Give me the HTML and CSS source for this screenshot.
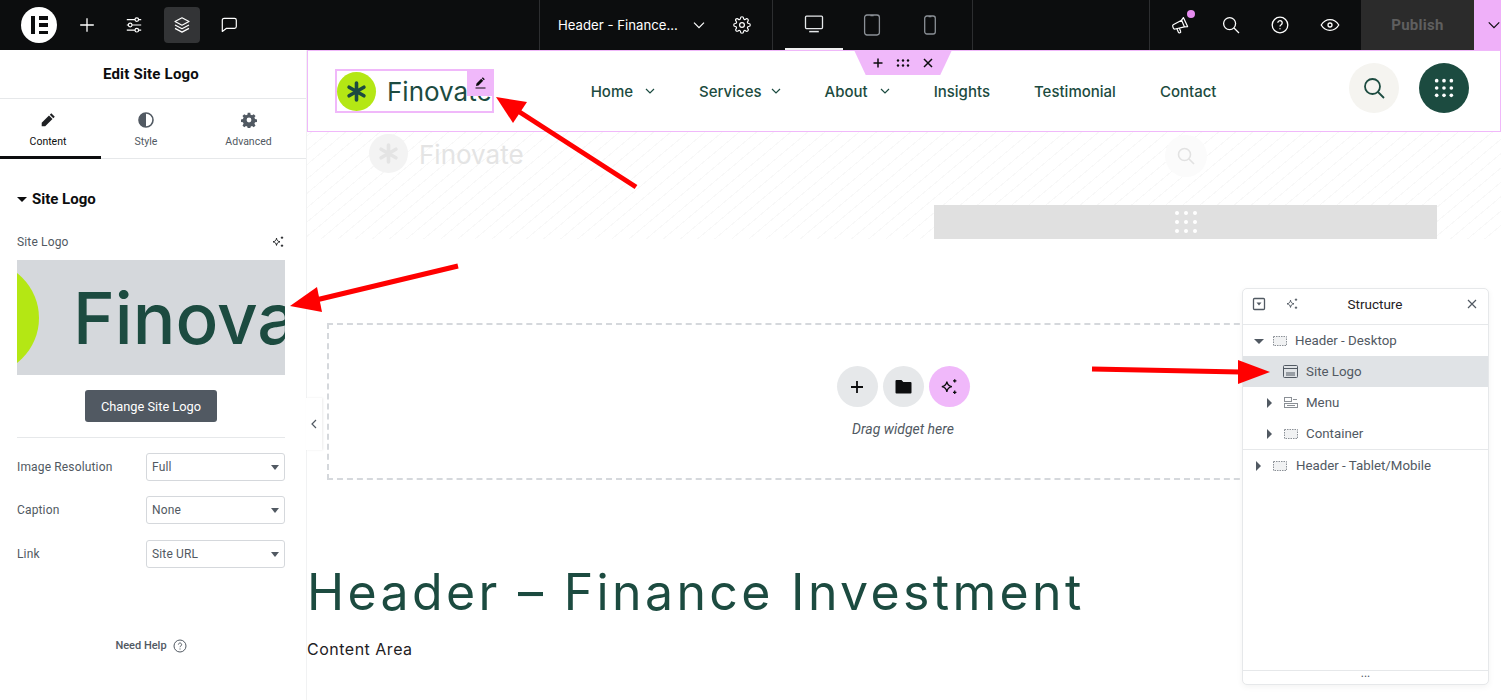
FILE: index.html
```html
<!DOCTYPE html>
<html lang="en">
<head>
    <meta charset="UTF-8">
    <meta name="viewport" content="width=device-width, initial-scale=1.0">
    <title>Edit Site Logo</title>
    <link rel="stylesheet" href="styles.css">
</head>
<body>
    <header class="topbar">
        <div class="top-tools">
            <span class="el-logo"><i class="el-bar"></i><i class="el-lines"><b></b><b></b><b></b></i></span>
            <button class="top-btn"><svg width="20" height="20" viewBox="0 0 20 20" fill="none" stroke="#fff" stroke-width="1.3"><path d="M10 3.2v13.6M3.2 10h13.6"/></svg></button>
            <button class="top-btn"><svg width="20" height="20" viewBox="0 0 20 20" fill="none" stroke="#fff" stroke-width="1.2"><path d="M2.8 4.6h8.2M14.6 4.6h2.6M2.8 10h1.6M8 10h9.2M2.8 15.2h8.2M14.6 15.2h2.6"/><circle cx="12.8" cy="4.6" r="1.8"/><circle cx="6.2" cy="10" r="1.8"/><circle cx="12.8" cy="15.2" r="1.8"/></svg></button>
            <button class="top-btn top-btn-active"><svg width="20" height="20" viewBox="0 0 20 20" fill="none" stroke="#fff" stroke-width="1.2" stroke-linejoin="round"><path d="M10 2.8l7 3.7-7 3.7-7-3.7z"/><path d="M3 10l7 3.7 7-3.7M3 13.4l7 3.7 7-3.7"/></svg></button>
            <button class="top-btn"><svg width="20" height="20" viewBox="0 0 20 20" fill="none" stroke="#fff" stroke-width="1.2" stroke-linejoin="round"><path d="M5.5 3.4h10a1.8 1.8 0 0 1 1.8 1.8v6.4a1.8 1.8 0 0 1-1.8 1.8H7.2l-3.9 3V5.2a1.8 1.8 0 0 1 2.2-1.8z"/></svg></button>
        </div>
        <div class="top-title">
            <span class="doc-name">Header - Finance...</span>
            <svg class="doc-caret" width="14" height="14" viewBox="0 0 14 14" fill="none" stroke="#fff" stroke-width="1.2"><path d="M2 4.6l5 5 5-5"/></svg>
            <svg class="doc-gear" width="18" height="18" viewBox="0 0 24 24" fill="none" stroke="#fff" stroke-width="1.6" stroke-linejoin="round"><circle cx="12" cy="12" r="3.2"/><path d="M19.4 15a1.7 1.7 0 0 0 .3 1.8l.1.1a2 2 0 1 1-2.900 2.900l-.1-.1a1.7 1.7 0 0 0-2.800 1.200v.1a2 2 0 1 1-4 0v-.1a1.7 1.7 0 0 0-2.900-1.200l-.1.1a2 2 0 1 1-2.800-2.900l.1-.1a1.7 1.7 0 0 0-1.200-2.800H3a2 2 0 1 1 0-4h.1a1.7 1.7 0 0 0 1.200-2.900l-.1-.1a2 2 0 1 1 2.800-2.800l.1.1a1.7 1.7 0 0 0 2.900-1.200V3a2 2 0 1 1 4 0v.1a1.7 1.7 0 0 0 2.800 1.200l.1-.1a2 2 0 1 1 2.900 2.800l-.1.1a1.7 1.7 0 0 0 1.200 2.900h.1a2 2 0 1 1 0 4h-.1a1.7 1.7 0 0 0-1.500 1z"/></svg>
        </div>
        <div class="top-devices">
            <span class="device device-active"><svg width="20" height="20" viewBox="0 0 20 20" fill="none" stroke="#e6e8ea" stroke-width="1.3" stroke-linejoin="round"><rect x="1.5" y="2.2" width="17" height="12.4" rx="1"/><path d="M5.2 17.6h9.6" stroke-width="1.5"/></svg></span>
            <span class="device"><svg width="18" height="22" viewBox="0 0 18 22" fill="none" stroke="#8b9096" stroke-width="1.3"><rect x="1.6" y="1" width="14.8" height="20" rx="2.4"/><path d="M7.4 1.6h3.2"/></svg></span>
            <span class="device"><svg width="14" height="20" viewBox="0 0 14 20" fill="none" stroke="#8b9096" stroke-width="1.3"><rect x="1.7" y="1" width="10.6" height="18" rx="2.2"/><path d="M5.6 1.6h2.8"/></svg></span>
        </div>
        <div class="top-spacer"></div>
        <div class="top-actions">
            <span class="action action-notify"><svg width="20" height="20" viewBox="0 0 20 20" fill="none" stroke="#fff" stroke-width="1.2" stroke-linejoin="round"><path d="M2.2 9.8l8.400-4.600 2.800 6.600-9.200 2.200a1.700 1.700 0 0 1-2-1.200l-.4-1.200a1.500 1.500 0 0 1 .4-1.800z"/><path d="M10.600 5.200L12.400 2.600l4.200 9-3.200.2"/><path d="M5.800 13.600l1.600 3.600a1.200 1.200 0 0 0 2.200-1l-1.200-3"/></svg></span>
            <span class="action"><svg width="20" height="20" viewBox="0 0 20 20" fill="none" stroke="#fff" stroke-width="1.3"><circle cx="8.6" cy="8.6" r="6"/><path d="M13 13l5 5"/></svg></span>
            <span class="action"><svg width="20" height="20" viewBox="0 0 20 20" fill="none" stroke="#fff" stroke-width="1.3"><circle cx="10" cy="10" r="7.8"/><path d="M7.8 7.8a2.200 2.200 0 1 1 3.400 1.900c-.8.500-1.200 1-1.200 1.900"/><path d="M10 13.2v1"/></svg></span>
            <span class="action"><svg width="20" height="20" viewBox="0 0 20 20" fill="none" stroke="#fff" stroke-width="1.3"><path d="M1.2 10C3.4 6.4 6.4 4.6 10 4.6s6.600 1.800 8.800 5.400c-2.200 3.600-5.200 5.400-8.800 5.400S3.400 13.600 1.200 10z"/><circle cx="10" cy="10" r="2"/></svg></span>
        </div>
        <button class="publish">Publish</button>
        <button class="publish-more"><svg width="16" height="16" viewBox="0 0 16 16" fill="none" stroke="#0c0d0e" stroke-width="1.4"><path d="M2 5l6 6 6-6"/></svg></button>
    </header>

    <div class="workspace">
        <aside class="sidebar">
            <h2 class="side-title">Edit Site Logo</h2>
            <nav class="tabs">
                <a class="tab tab-active">
                    <svg width="16" height="16" viewBox="0 0 16 16" fill="#1f2124"><path d="M11.3 1.200l3.500 3.500-1.500 1.500-3.500-3.500zM9 3.500l3.500 3.500-7.300 7.300H1.700v-3.500z"/></svg>
                    Content
                </a>
                <a class="tab">
                    <svg width="16" height="16" viewBox="0 0 16 16"><circle cx="8" cy="8" r="7" fill="none" stroke="#515962" stroke-width="1.6"/><path d="M8 1a7 7 0 0 0 0 14z" fill="#515962"/></svg>
                    Style
                </a>
                <a class="tab">
                    <svg width="16" height="16" viewBox="0 0 24 24" fill="#515962"><path d="M13.9 1l.5 3a8.500 8.500 0 0 1 2.200.9l2.500-1.700 2.700 2.700-1.700 2.500c.4.700.7 1.400.9 2.200l3 .5v3.800l-3 .5a8.500 8.500 0 0 1-.9 2.200l1.700 2.500-2.700 2.700-2.500-1.700c-.7.400-1.400.7-2.200.9l-.5 3h-3.800l-.5-3a8.500 8.500 0 0 1-2.200-.9l-2.500 1.700-2.700-2.700 1.700-2.500a8.500 8.500 0 0 1-.9-2.200l-3-.5v-3.800l3-.5c.2-.8.5-1.500.9-2.200L2.200 5.900l2.700-2.700 2.500 1.700c.7-.4 1.400-.7 2.200-.9l.5-3zM12 8.400a3.600 3.600 0 1 0 0 7.200 3.600 3.600 0 0 0 0-7.200z"/></svg>
                    Advanced
                </a>
            </nav>
            <div class="side-body">
                <h3 class="section-title"><i class="caret-down"></i>Site Logo</h3>
                <div class="label-row">
                    <span class="field-label">Site Logo</span>
                    <svg width="14" height="14" viewBox="0 0 14 14" fill="none" stroke="#1f2124"><path d="M5.5 3.200c.4 2.300 1.300 3.200 3.500 3.600-2.200.4-3.100 1.300-3.500 3.600-.4-2.300-1.300-3.200-3.500-3.600 2.200-.4 3.100-1.300 3.500-3.600z"/><path d="M11 1.500v2.400M9.800 2.700h2.400M11 9.500v2.400M9.800 10.700h2.400" stroke-width="1"/></svg>
                </div>
                <div class="logo-preview">
                    <span class="preview-dot"></span>
                    <span class="preview-name">Finovate</span>
                </div>
                <button class="change-btn">Change Site Logo</button>
                <div class="side-rule"></div>
                <div class="field-row">
                    <span class="field-label">Image Resolution</span>
                    <span class="fake-select">Full</span>
                </div>
                <div class="field-row">
                    <span class="field-label">Caption</span>
                    <span class="fake-select">None</span>
                </div>
                <div class="field-row">
                    <span class="field-label">Link</span>
                    <span class="fake-select">Site URL</span>
                </div>
                <div class="need-help">
                    Need Help
                    <svg width="14" height="14" viewBox="0 0 14 14" fill="none" stroke="#515962"><circle cx="7" cy="7" r="6"/><path d="M5.4 5.500a1.600 1.600 0 1 1 2.500 1.400c-.6.400-.9.700-.9 1.300M7 9.500v1"/></svg>
                </div>
            </div>
        </aside>

        <main class="canvas">
            <div class="site-header">
                <div class="logo-widget">
                    <span class="logo-dot"><svg width="21" height="21" viewBox="0 0 21 21" stroke="#1c4b40" stroke-width="3.6" stroke-linecap="round"><path d="M10.5 2v17M3.100 6.200l14.800 8.600M17.900 6.200L3.100 14.800"/></svg></span>
                    <span class="logo-name">Finovate</span>
                    <span class="logo-edit"><svg width="13" height="13" viewBox="0 0 13 13" fill="#0c0d0e"><path d="M8.8 1.200l2 2-1 1-2-2zM7.200 2.800l2 2-4.700 4.700-2.500.5.500-2.500z"/><path d="M1.5 12h10" stroke="#0c0d0e"/></svg></span>
                </div>
                <nav class="site-nav">
                    <a class="nav-link">Home<svg width="10" height="10" viewBox="0 0 10 10" fill="none" stroke="#1c4b40" stroke-width="1.2"><path d="M1 3l4 4 4-4"/></svg></a>
                    <a class="nav-link">Services<svg width="10" height="10" viewBox="0 0 10 10" fill="none" stroke="#1c4b40" stroke-width="1.2"><path d="M1 3l4 4 4-4"/></svg></a>
                    <a class="nav-link">About<svg width="10" height="10" viewBox="0 0 10 10" fill="none" stroke="#1c4b40" stroke-width="1.2"><path d="M1 3l4 4 4-4"/></svg></a>
                    <a class="nav-link">Insights</a>
                    <a class="nav-link">Testimonial</a>
                    <a class="nav-link">Contact</a>
                </nav>
                <div class="header-btns">
                    <span class="round-btn round-light"><svg width="24" height="24" viewBox="0 0 24 24" fill="none" stroke="#1c4b40" stroke-width="1.8"><circle cx="10.5" cy="10.5" r="7.5"/><path d="M16 16l6 6"/></svg></span>
                    <span class="round-btn round-dark"><svg width="22" height="22" viewBox="0 0 24 24" fill="#fff"><circle cx="4" cy="4" r="2"/><circle cx="12" cy="4" r="2"/><circle cx="20" cy="4" r="2"/><circle cx="4" cy="12" r="2"/><circle cx="12" cy="12" r="2"/><circle cx="20" cy="12" r="2"/><circle cx="4" cy="20" r="2"/><circle cx="12" cy="20" r="2"/><circle cx="20" cy="20" r="2"/></svg></span>
                </div>
            </div>

            <div class="ghost-row">
                <div class="ghost-logo">
                    <span class="ghost-dot"><svg width="21" height="21" viewBox="0 0 21 21" stroke="#e4e4e4" stroke-width="3.6" stroke-linecap="round"><path d="M10.5 2v17M3.100 6.200l14.800 8.600M17.900 6.200L3.100 14.800"/></svg></span>
                    <span class="ghost-name">Finovate</span>
                </div>
                <div class="ghost-right">
                    <span class="ghost-search"><svg width="20" height="20" viewBox="0 0 20 20" fill="none" stroke="#e2e2e2" stroke-width="1.6"><circle cx="8.5" cy="8.5" r="6"/><path d="M13 13l5 5"/></svg></span>
                    <div class="ghost-bar"><svg width="24" height="24" viewBox="0 0 24 24" fill="#fff"><circle cx="3" cy="3" r="2"/><circle cx="12" cy="3" r="2"/><circle cx="21" cy="3" r="2"/><circle cx="3" cy="12" r="2"/><circle cx="12" cy="12" r="2"/><circle cx="21" cy="12" r="2"/><circle cx="3" cy="21" r="2"/><circle cx="12" cy="21" r="2"/><circle cx="21" cy="21" r="2"/></svg></div>
                </div>
            </div>

            <div class="dropzone">
                <div class="drop-btns">
                    <span class="drop-btn"><svg width="16" height="16" viewBox="0 0 16 16" fill="none" stroke="#0c0d0e" stroke-width="1.8"><path d="M8 2v12M2 8h12"/></svg></span>
                    <span class="drop-btn"><svg width="17" height="15" viewBox="0 0 17 15" fill="#0c0d0e"><path d="M1.5 1h5l1.800 2h7.200a1 1 0 0 1 1 1v9.500a1 1 0 0 1-1 1h-14a1 1 0 0 1-1-1V2a1 1 0 0 1 1-1z"/></svg></span>
                    <span class="drop-btn drop-btn-ai"><svg width="20" height="20" viewBox="0 0 14 14" fill="none" stroke="#0c0d0e" stroke-width=".9"><path d="M5.5 3.200c.4 2.300 1.300 3.200 3.500 3.600-2.200.4-3.100 1.300-3.500 3.600-.4-2.300-1.300-3.200-3.500-3.600 2.200-.4 3.100-1.300 3.500-3.600z"/><path d="M11 1.500v2.400M9.800 2.700h2.400M11 9.500v2.400M9.800 10.700h2.400"/></svg></span>
                </div>
                <p class="drop-hint">Drag widget here</p>
            </div>

            <h1 class="page-title">Header – Finance Investment</h1>
            <p class="page-text">Content Area</p>

            <div class="section-handle">
                <svg width="10" height="10" viewBox="0 0 10 10" fill="none" stroke="#0c0d0e" stroke-width="1.5"><path d="M5 .5v9M.5 5h9"/></svg>
                <svg width="14" height="8" viewBox="0 0 14 8" fill="#0c0d0e"><circle cx="2" cy="1.5" r="1.2"/><circle cx="7" cy="1.5" r="1.2"/><circle cx="12" cy="1.5" r="1.2"/><circle cx="2" cy="6.5" r="1.2"/><circle cx="7" cy="6.5" r="1.2"/><circle cx="12" cy="6.5" r="1.2"/></svg>
                <svg width="10" height="10" viewBox="0 0 10 10" fill="none" stroke="#0c0d0e" stroke-width="1.5"><path d="M1 1l8 8M9 1l-8 8"/></svg>
            </div>
            <span class="collapse-tab"><svg width="8" height="10" viewBox="0 0 8 10" fill="none" stroke="#515962" stroke-width="1.2"><path d="M6 1L2 5l4 4"/></svg></span>
        </main>
    </div>

    <section class="structure">
        <div class="structure-head">
            <svg width="14" height="14" viewBox="0 0 14 14" fill="none" stroke="#515962" stroke-width="1.3"><rect x="1.5" y="1.5" width="11" height="11" rx="1"/><path d="M4.5 5.500h5L7 8.500z" fill="#515962" stroke="none"/></svg>
            <svg class="structure-ai" width="14" height="14" viewBox="0 0 14 14" fill="none" stroke="#515962"><path d="M5.5 3.200c.4 2.300 1.300 3.200 3.500 3.600-2.200.4-3.100 1.300-3.500 3.600-.4-2.300-1.300-3.200-3.500-3.600 2.200-.4 3.100-1.300 3.500-3.600z"/><path d="M11 1.500v2.400M9.800 2.700h2.400M11 9.500v2.400M9.800 10.700h2.400" stroke-width="1"/></svg>
            <span class="structure-title">Structure</span>
            <svg width="10" height="10" viewBox="0 0 10 10" fill="none" stroke="#515962" stroke-width="1.2"><path d="M1 1l8 8M9 1l-8 8"/></svg>
        </div>
        <ul class="tree">
            <li class="tree-item"><i class="caret-down caret-grey"></i><svg class="box-icon" width="14" height="10" viewBox="0 0 14 10" fill="#f1f2f3" stroke="#8b9096" stroke-dasharray="1.5 1"><rect x=".5" y=".5" width="13" height="9"/></svg>Header - Desktop</li>
            <li class="tree-item tree-selected"><svg class="box-icon" width="15" height="13" viewBox="0 0 15 13" fill="none" stroke="#515962"><rect x=".5" y=".5" width="14" height="12" rx="1"/><path d="M.5 3.500h14M3 8h9M3 10h9"/></svg>Site Logo</li>
            <li class="tree-item tree-child"><i class="caret-right"></i><svg class="box-icon" width="14" height="11" viewBox="0 0 14 11" fill="none" stroke="#8b9096"><rect x=".5" y=".5" width="7" height="4"/><rect x=".5" y="6.5" width="13" height="4"/><path d="M9 2.500h4M3 8.500h8"/></svg>Menu</li>
            <li class="tree-item tree-child"><i class="caret-right"></i><svg class="box-icon" width="14" height="10" viewBox="0 0 14 10" fill="#f1f2f3" stroke="#8b9096" stroke-dasharray="1.5 1"><rect x=".5" y=".5" width="13" height="9"/></svg>Container</li>
            <li class="tree-item tree-top"><i class="caret-right"></i><svg class="box-icon" width="14" height="10" viewBox="0 0 14 10" fill="#f1f2f3" stroke="#8b9096" stroke-dasharray="1.5 1"><rect x=".5" y=".5" width="13" height="9"/></svg>Header - Tablet/Mobile</li>
        </ul>
        <div class="structure-foot">...</div>
    </section>

    <svg class="arrows" width="1501" height="700" viewBox="0 0 1501 700" fill="#ff0000" stroke="none">
        <path d="M636 187L518 111" stroke="#ff0000" stroke-width="5"/>
        <polygon points="496,97 527,102 513,123"/>
        <path d="M458 266L316 300" stroke="#ff0000" stroke-width="5"/>
        <polygon points="290,306 317,287 322,312"/>
        <path d="M1092 369L1240 372" stroke="#ff0000" stroke-width="5"/>
        <polygon points="1270,372 1238,360 1238,384"/>
    </svg>
</body>
</html>
```

FILE: styles.css
```css
* {
    box-sizing: border-box;
}
body {
    font-family: Roboto, 'Liberation Sans', sans-serif;
    background-color: white;
    margin: 0;
    height: 700px;
    overflow: hidden;
    position: relative;
    color: #1f2124;
}
button {
    font-family: inherit;
    border: none;
    padding: 0;
    cursor: pointer;
}

/* top bar */
.topbar {
    display: flex;
    height: 50px;
    background-color: #0c0d0e;
    color: white;
}
.top-tools {
    display: flex;
    align-items: center;
    width: 539px;
    padding-left: 21px;
    gap: 11.5px;
}
.el-logo {
    display: flex;
    justify-content: center;
    align-items: center;
    gap: 4px;
    width: 36px;
    height: 36px;
    border-radius: 50%;
    background-color: white;
}
.el-bar {
    width: 4px;
    height: 18px;
    background-color: #0c0d0e;
}
.el-lines {
    display: flex;
    flex-direction: column;
    justify-content: space-between;
    width: 9px;
    height: 18px;
}
.el-lines b {
    height: 3.5px;
    background-color: #0c0d0e;
}
.top-btn {
    display: flex;
    justify-content: center;
    align-items: center;
    width: 36px;
    height: 36px;
    border-radius: 4px;
    background: none;
}
.top-btn-active {
    background-color: #333436;
}
.top-title {
    display: flex;
    align-items: center;
    width: 234px;
    padding-left: 18px;
    border-left: 1px solid #2d2e30;
    border-right: 1px solid #2d2e30;
}
.doc-name {
    font-family: Inter, sans-serif;
    font-size: 13.2px;
    width: 134px;
    white-space: nowrap;
}
.doc-gear {
    margin-left: 27px;
}
.top-devices {
    display: flex;
    width: 200px;
    padding-left: 12px;
    border-right: 1px solid #2d2e30;
}
.device {
    display: flex;
    justify-content: center;
    align-items: center;
    width: 58px;
    height: 50px;
}
.device-active {
    border-bottom: 2px solid #f0f0f0;
}
.top-spacer {
    flex-grow: 1;
}
.top-actions {
    display: flex;
    align-items: center;
    width: 212px;
    padding-left: 6px;
    border-left: 1px solid #2d2e30;
}
.action {
    display: flex;
    justify-content: center;
    width: 49.7px;
    position: relative;
}
.action-notify::after {
    content: "";
    position: absolute;
    top: -5px;
    right: 11px;
    width: 8px;
    height: 8px;
    border-radius: 50%;
    background-color: #e78cf0;
}
.publish {
    width: 113px;
    background-color: #2b2b2b;
    color: #5f5f5f;
    font-size: 15px;
    font-weight: 700;
    letter-spacing: .3px;
}
.publish-more {
    display: flex;
    align-items: center;
    justify-content: center;
    width: 27px;
    padding-left: 13px;
    overflow: hidden;
    background-color: #efb0f9;
}

/* main area */
.workspace {
    display: flex;
    height: 650px;
}
.sidebar {
    width: 307px;
    flex-shrink: 0;
    border-right: 1px solid #f1f2f3;
}
.side-title {
    margin: 0;
    height: 49px;
    line-height: 48px;
    padding-right: 4px;
    text-align: center;
    font-size: 15px;
    font-weight: 700;
    letter-spacing: .2px;
    color: #0c0d0e;
    border-bottom: 1px solid #e6e8ea;
}
.tabs {
    display: flex;
    height: 60px;
    border-bottom: 1px solid #e6e8ea;
}
.tab {
    display: flex;
    flex-direction: column;
    align-items: center;
    gap: 7px;
    padding-top: 13px;
    font-size: 10.5px;
    color: #515962;
}
.tab:nth-child(1) {
    width: 101px;
    padding-right: 5px;
}
.tab:nth-child(2) {
    width: 90px;
}
.tab:nth-child(3) {
    width: 115px;
}
.tab-active {
    color: #0c0d0e;
    border-bottom: 3px solid #0c0d0e;
    height: 60px;
}
.side-body {
    padding: 0 21px 0 17px;
}
.section-title {
    display: flex;
    align-items: center;
    gap: 5px;
    margin: 32px 0 0;
    height: 16px;
    font-size: 15px;
    font-weight: 700;
    color: #0c0d0e;
}
.caret-down {
    display: inline-block;
    width: 0;
    height: 0;
    margin-top: 1px;
    border-left: 5px solid transparent;
    border-right: 5px solid transparent;
    border-top: 5px solid #0c0d0e;
}
.caret-right {
    display: inline-block;
    width: 0;
    height: 0;
    border-top: 5px solid transparent;
    border-bottom: 5px solid transparent;
    border-left: 5px solid #515962;
}
.caret-grey {
    border-top-color: #515962;
}
.label-row {
    display: flex;
    justify-content: space-between;
    align-items: center;
    margin-top: 27px;
    height: 16px;
}
.field-label {
    font-size: 12px;
    letter-spacing: .15px;
    color: #515962;
}
.logo-preview {
    display: flex;
    align-items: center;
    height: 115px;
    margin-top: 10px;
    overflow: hidden;
    background-color: #d5d8dc;
}
.preview-dot {
    flex-shrink: 0;
    width: 114px;
    height: 114px;
    margin-left: -92px;
    border-radius: 50%;
    background-color: #b4e714;
}
.preview-name {
    margin-left: 34px;
    font-family: Inter, sans-serif;
    font-size: 71px;
    font-weight: 500;
    color: #1c4b40;
    white-space: nowrap;
}
.change-btn {
    display: block;
    width: 132px;
    height: 32px;
    margin: 15px auto 0;
    border-radius: 3px;
    background-color: #515962;
    color: white;
    font-size: 12.8px;
}
.side-rule {
    height: 1px;
    margin: 15px 0;
    background-color: #e6e8ea;
}
.field-row {
    display: flex;
    align-items: center;
    height: 28px;
    margin-bottom: 15.4px;
}
.field-row .field-label {
    width: 129px;
}
.fake-select {
    position: relative;
    width: 139px;
    height: 28px;
    line-height: 26px;
    padding-left: 5px;
    border: 1px solid #d5d8dc;
    border-radius: 3px;
    font-size: 12px;
    letter-spacing: .15px;
    color: #515962;
}
.fake-select::after {
    content: "";
    position: absolute;
    right: 5px;
    top: 11px;
    border-left: 4.5px solid transparent;
    border-right: 4.5px solid transparent;
    border-top: 5px solid #515962;
}
.need-help {
    display: flex;
    justify-content: center;
    align-items: center;
    gap: 6px;
    margin-top: 71px;
    font-size: 11px;
    font-weight: 500;
    color: #515962;
}

/* canvas */
.canvas {
    flex-grow: 1;
    min-width: 0;
    position: relative;
}
.site-header {
    display: flex;
    align-items: center;
    height: 82px;
    padding-left: 27px;
    border: 1px solid #f0b8fa;
    font-family: Inter, sans-serif;
}
.logo-widget {
    display: flex;
    align-items: center;
    position: relative;
    width: 159px;
    height: 44px;
    border: 2px solid #f0b8fa;
}
.logo-dot {
    display: flex;
    justify-content: center;
    align-items: center;
    width: 39px;
    height: 39px;
    border-radius: 50%;
    background-color: #b4e714;
}
.logo-name {
    margin-left: 11px;
    font-size: 26px;
    color: #1c4b40;
    white-space: nowrap;
}
.logo-edit {
    display: flex;
    justify-content: center;
    align-items: center;
    position: absolute;
    top: -2px;
    right: -2px;
    width: 27px;
    height: 27px;
    background-color: #f0b8fa;
}
.site-nav {
    display: flex;
    gap: 44px;
    margin-left: 96.7px;
}
.nav-link {
    display: flex;
    align-items: center;
    gap: 12px;
    font-size: 15px;
    font-weight: 500;
    color: #1c4b40;
}
.nav-link:nth-child(2) {
    gap: 9px;
}
.header-btns {
    display: flex;
    gap: 20px;
    margin: 0 31px 6px auto;
}
.round-btn {
    display: flex;
    justify-content: center;
    align-items: center;
    width: 50px;
    height: 50px;
    border-radius: 50%;
}
.round-light {
    background-color: #f5f4f0;
}
.round-dark {
    background-color: #1c4b40;
}
.ghost-row {
    display: flex;
    height: 107px;
    padding-left: 62px;
    background: repeating-linear-gradient(-40deg, #fff 0, #fff 10px, #f8f8f8 10px, #f8f8f8 11px);
    font-family: Inter, sans-serif;
}
.ghost-logo {
    display: flex;
    align-items: flex-start;
    width: 565px;
    padding-top: 2px;
}
.ghost-dot {
    display: flex;
    justify-content: center;
    align-items: center;
    width: 39px;
    height: 39px;
    border-radius: 50%;
    background-color: #f3f3f3;
}
.ghost-name {
    margin: 1px 0 0 11px;
    font-size: 26px;
    line-height: 40px;
    color: #e4e4e4;
}
.ghost-right {
    display: flex;
    flex-direction: column;
    align-items: center;
    width: 503px;
}
.ghost-search {
    display: flex;
    justify-content: center;
    align-items: center;
    width: 42px;
    height: 42px;
    margin-top: 3px;
    border-radius: 50%;
    background-color: #fbfbfb;
}
.ghost-bar {
    display: flex;
    justify-content: center;
    align-items: center;
    width: 100%;
    height: 34px;
    margin-top: 28px;
    background-color: #e0e0e0;
}
.dropzone {
    display: flex;
    flex-direction: column;
    align-items: center;
    height: 157px;
    margin: 84px 22px 0 20px;
    padding-top: 41px;
    border: 2px dashed #d5d8dc;
}
.drop-btns {
    display: flex;
    gap: 5px;
}
.drop-btn {
    display: flex;
    justify-content: center;
    align-items: center;
    width: 41px;
    height: 41px;
    border-radius: 50%;
    background-color: #e6e8ea;
}
.drop-btn-ai {
    background-color: #f0b8fa;
}
.drop-hint {
    margin: 14px 0 0;
    font-size: 14px;
    font-style: italic;
    color: #515962;
}
.page-title {
    margin: 82px 0 0;
    font-family: Inter, sans-serif;
    font-size: 50px;
    line-height: 60px;
    font-weight: 400;
    letter-spacing: 3.35px;
    color: #1c4b40;
    white-space: nowrap;
}
.page-text {
    margin: 17px 0 0;
    font-family: Inter, sans-serif;
    font-size: 16px;
    letter-spacing: .5px;
    color: #1f2124;
}
.section-handle {
    display: flex;
    justify-content: center;
    align-items: center;
    gap: 13px;
    position: absolute;
    top: 0;
    left: 547px;
    width: 98px;
    height: 25px;
    background-color: #f0b8fa;
    clip-path: polygon(0 0, 100% 0, 88% 100%, 12% 100%);
}
.collapse-tab {
    display: flex;
    justify-content: center;
    align-items: center;
    position: absolute;
    top: 348px;
    left: -1px;
    width: 16px;
    height: 52px;
    background-color: white;
    box-shadow: 1px 0 2px rgba(0, 0, 0, 0.08);
}

/* structure window */
.structure {
    display: flex;
    flex-direction: column;
    position: absolute;
    top: 288px;
    left: 1242px;
    width: 247px;
    height: 397px;
    background-color: white;
    border: 1px solid #e6e8ea;
    border-radius: 5px;
    box-shadow: 0 2px 6px rgba(0, 0, 0, 0.05);
}
.structure-head {
    display: flex;
    align-items: center;
    height: 36px;
    padding: 0 11px 5px 9px;
    flex-shrink: 0;
    border-bottom: 1px solid #e6e8ea;
}
.structure-ai {
    margin-left: 19px;
}
.structure-title {
    flex-grow: 1;
    padding-right: 16px;
    text-align: center;
    font-size: 13.5px;
    color: #1f2124;
}
.tree {
    flex-grow: 1;
    margin: 0;
    padding: 0;
    list-style: none;
}
.tree-item {
    display: flex;
    align-items: center;
    height: 31px;
    padding-left: 11px;
    font-size: 13.3px;
    color: #515962;
}
.tree-child {
    padding-left: 24px;
}
.tree-top {
    padding-left: 13px;
    border-top: 1px solid #e6e8ea;
    height: 32px;
}
.tree-selected {
    padding-left: 40px;
    background-color: #e0e3e6;
}
.box-icon {
    flex-shrink: 0;
    margin: 0 8px 0 9px;
}
.tree-child .box-icon {
    margin-left: 12px;
}
.tree-top .box-icon {
    margin: 0 9px 0 12px;
}
.tree-selected .box-icon {
    margin: 0 8px 0 0;
}
.structure-foot {
    height: 14px;
    line-height: 5px;
    text-align: center;
    font-size: 12px;
    color: #515962;
    border-top: 1px solid #e6e8ea;
}
.arrows {
    position: absolute;
    top: 0;
    left: 0;
    pointer-events: none;
}
```
